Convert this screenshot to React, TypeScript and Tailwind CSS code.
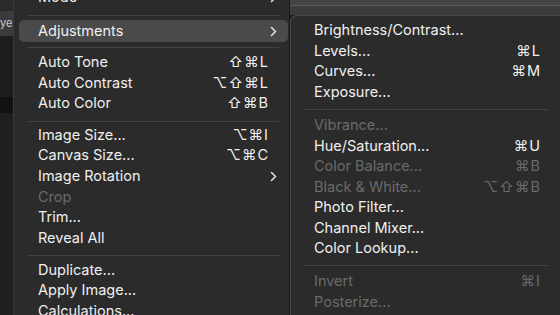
const font = { fontFamily: "Inter, 'DejaVu Sans', sans-serif" };

type Item =
  | { kind: "sep"; h: string; pt: string }
  | {
      kind: "item";
      label: string;
      shortcut?: string;
      disabled?: boolean;
      submenu?: boolean;
      active?: boolean;
    };

const mainItems: Item[] = [
  { kind: "item", label: "Mode", submenu: true },
  { kind: "sep", h: "h-[12px]", pt: "pt-[7px]" },
  { kind: "item", label: "Adjustments", submenu: true, active: true },
  { kind: "sep", h: "h-[10px]", pt: "pt-[5px]" },
  { kind: "item", label: "Auto Tone", shortcut: "⇧⌘L" },
  { kind: "item", label: "Auto Contrast", shortcut: "⌥⇧⌘L" },
  { kind: "item", label: "Auto Color", shortcut: "⇧⌘B" },
  { kind: "sep", h: "h-[11px]", pt: "pt-[7px]" },
  { kind: "item", label: "Image Size...", shortcut: "⌥⌘I" },
  { kind: "item", label: "Canvas Size...", shortcut: "⌥⌘C" },
  { kind: "item", label: "Image Rotation", submenu: true },
  { kind: "item", label: "Crop", disabled: true },
  { kind: "item", label: "Trim..." },
  { kind: "item", label: "Reveal All" },
  { kind: "sep", h: "h-[11.5px]", pt: "pt-[7px]" },
  { kind: "item", label: "Duplicate..." },
  { kind: "item", label: "Apply Image..." },
  { kind: "item", label: "Calculations..." },
];

const subItems: Item[] = [
  { kind: "item", label: "Brightness/Contrast..." },
  { kind: "item", label: "Levels...", shortcut: "⌘L" },
  { kind: "item", label: "Curves...", shortcut: "⌘M" },
  { kind: "item", label: "Exposure..." },
  { kind: "sep", h: "h-[12.5px]", pt: "pt-[6.5px]" },
  { kind: "item", label: "Vibrance...", disabled: true },
  { kind: "item", label: "Hue/Saturation...", shortcut: "⌘U" },
  { kind: "item", label: "Color Balance...", shortcut: "⌘B", disabled: true },
  { kind: "item", label: "Black & White...", shortcut: "⌥⇧⌘B", disabled: true },
  { kind: "item", label: "Photo Filter..." },
  { kind: "item", label: "Channel Mixer..." },
  { kind: "item", label: "Color Lookup..." },
  { kind: "sep", h: "h-[12px]", pt: "pt-[6px]" },
  { kind: "item", label: "Invert", shortcut: "⌘I", disabled: true },
  { kind: "item", label: "Posterize...", disabled: true },
  { kind: "item", label: "Threshold...", disabled: true },
];

function Chevron() {
  return (
    <svg width="7" height="11" viewBox="0 0 7 11" className="shrink-0">
      <path d="M1.5 1.5 L5.5 5.5 L1.5 9.5" fill="none" stroke="#e0e0e0" strokeWidth="1.6" strokeLinecap="round" strokeLinejoin="round" />
    </svg>
  );
}

function MenuRows({ items, inset }: { items: Item[]; inset: "main" | "sub" }) {
  return (
    <>
      {items.map((it, i) => {
        if (it.kind === "sep") {
          return (
            <div key={i} className={it.h + " " + it.pt + " shrink-0 " + (inset === "main" ? "pl-[14px] pr-[10px]" : "pl-[13px] pr-[12px]")}>
              <div className="h-px w-full bg-[#434343]" />
            </div>
          );
        }
        const color = it.disabled ? "text-[#6a6a6a]" : "text-[#f0f0f0]";
        return (
          <div
            key={i}
            className={
              "flex items-center shrink-0 rounded-[5px] " +
              (it.active ? "h-[22px] bg-[#4a4a4a] " : "h-[20.6px] ") +
              (inset === "main"
                ? "ml-[5px] mr-[1px] pl-[19px] " + (it.submenu ? "pr-[11px]" : "pr-[19px]")
                : "mx-[6px] pl-[17px] pr-[13px]")
            }
          >
            <span className={"flex-1 text-[14.5px] leading-none whitespace-nowrap " + color}>{it.label}</span>
            {it.shortcut && (
              <span className={"text-[14.5px] leading-none whitespace-nowrap tracking-[1px] " + color}>{it.shortcut}</span>
            )}
            {it.submenu && <Chevron />}
          </div>
        );
      })}
    </>
  );
}

export default function App() {
  return (
    <div className="w-[560px] h-[315px] overflow-hidden flex bg-[#1e1e1e]" style={font}>
      <div className="w-[13px] shrink-0 flex flex-col">
        <div className="h-[11px] bg-[#2a2a2a]" />
        <div className="h-[25px] bg-[#3b3b3b] text-[11px] text-[#cfcfcf] leading-[25px] overflow-hidden whitespace-nowrap">ye</div>
        <div className="h-[61px] bg-[#1d1d1d]" />
        <div className="h-[16px] bg-[#121212]" />
        <div className="flex-1 bg-[#1f1f1f]" />
      </div>
      <div className="w-[277px] shrink-0 bg-[#2b2b2b] border-l border-[#3a3a3a] border-r border-r-[#1b1b1b] flex flex-col -mt-[12.6px]">
        <MenuRows items={mainItems} inset="main" />
      </div>
      <div className="flex-1 flex flex-col">
        <div className="h-[15px] shrink-0 flex flex-col">
          <div className="h-[5px] bg-[#454545]" />
          <div className="h-px bg-[#5a5a5a]" />
          <div className="flex-1 bg-[#3c3c3c]" />
        </div>
        <div className="flex-1 bg-[#2b2b2b] border-l border-t border-[#4a4a4a] rounded-tl-[7px] pt-[4px] flex flex-col">
          <MenuRows items={subItems} inset="sub" />
        </div>
      </div>
    </div>
  );
}
